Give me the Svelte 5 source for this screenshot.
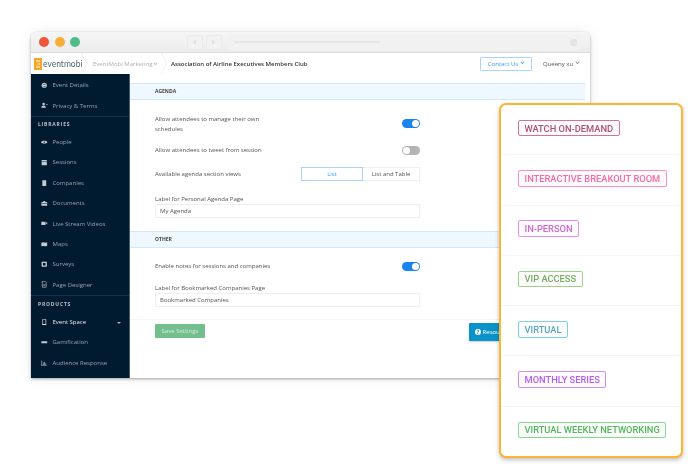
<script>
  const top_items = [
    ['Event Details', 'globe'],
    ['Privacy & Terms', 'user']
  ];
  const libraries = [
    ['People', 'eye'],
    ['Sessions', 'cal'],
    ['Companies', 'doc'],
    ['Documents', 'case'],
    ['Live Stream Videos', 'cam'],
    ['Maps', 'map'],
    ['Surveys', 'box'],
    ['Page Designer', 'page']
  ];
  const products = [
    ['Event Space', 'phone', true],
    ['Gamification', 'game'],
    ['Audience Response', 'chart']
  ];
  const tags = [
    ['WATCH ON-DEMAND', '#d4709b', '#b04f7c'],
    ['INTERACTIVE BREAKOUT ROOM', '#ff8fc0', '#f96aaa'],
    ['IN-PERSON', '#ea8fe9', '#cf68cf'],
    ['VIP ACCESS', '#9ed08a', '#73ae5e'],
    ['VIRTUAL', '#80cfe2', '#58a9be'],
    ['MONTHLY SERIES', '#d18cfb', '#b65ef2'],
    ['VIRTUAL WEEKLY NETWORKING', '#82dc8a', '#52b85c']
  ];
</script>

{#snippet icon(kind)}
  <svg class="ico" viewBox="0 0 10 10" fill="#c3cbd2">
    {#if kind === 'globe'}
      <circle cx="5" cy="5" r="4" />
      <path d="M3 3h4v1H3zM4 6h3v1H4z" fill="#001a30" />
    {:else if kind === 'user'}
      <circle cx="4" cy="3" r="2" />
      <path d="M0.5 9c0-2.5 1.5-3.5 3.5-3.5s3.500 1 3.500 3.500zM8 3.500h2v1H8z" />
    {:else if kind === 'eye'}
      <path d="M0 5c2-3 8-3 10 0-2 3-8 3-10 0z" />
      <circle cx="5" cy="5" r="1" fill="#001a30" />
    {:else if kind === 'cal'}
      <path d="M1 1.500h8v8H1z" />
      <path d="M1 3.500h8v.6H1z" fill="#001a30" />
    {:else if kind === 'doc'}
      <path d="M2 0.500h6v9H2z" />
    {:else if kind === 'case'}
      <path d="M0.500 3h9v6h-9zM3.500 1.500h3V3h-3z" />
      <path d="M0.500 5.500h9v.5h-9z" fill="#001a30" />
    {:else if kind === 'cam'}
      <path d="M0.500 2.500h6.500v5H0.500zM7.500 4.500l2-1.500v4l-2-1.500z" />
    {:else if kind === 'map'}
      <path d="M0.500 2.500l3 -.5 3 .5 3-.5v5.500l-3 .5-3-.5-3 .5z" />
    {:else if kind === 'box'}
      <path d="M1 1h8v8H1z" />
      <path d="M3 3h4v4H3z" fill="#001a30" />
    {:else if kind === 'page'}
      <path d="M2 0.500h4.500L8 2v7.500H2z" fill="none" stroke="#c3cbd2" />
      <path d="M3.500 4.500h3v.7h-3zM3.500 6.500h3v.7h-3z" />
    {:else if kind === 'phone'}
      <path d="M2.500 0.500h5v9h-5z" fill="none" stroke="#e6eaee" />
      <path d="M2.500 7.500h5v2h-5z" fill="#e6eaee" />
    {:else if kind === 'game'}
      <path d="M0.500 3.500h9v3h-9z" />
    {:else}
      <path d="M1 1v8h8" fill="none" stroke="#c3cbd2" />
      <path d="M3 4h1v4H3zM5 2.500h1V8H5zM7 5h1v3H7z" />
    {/if}
  </svg>
{/snippet}

{#snippet navrow(item)}
  <div class="nav-row" class:strong={item[2]}>
    {@render icon(item[1])}
    <span>{item[0]}</span>
    {#if item[2]}<i class="caret"></i>{/if}
  </div>
{/snippet}

{#snippet sep()}
  <svg class="sep" viewBox="0 0 6 21"><path d="M0 0l6 10.500L0 21" fill="none" stroke="#eee" /></svg>
{/snippet}

<div class="page">
  <div class="window">
    <div class="titlebar">
      <span class="dot red"></span>
      <span class="dot amber"></span>
      <span class="dot green"></span>
      <span class="navbtn"><i class="tri left"></i></span>
      <span class="navbtn"><i class="tri right"></i></span>
      <div class="urlbar"><span class="urlfill"></span><span class="urlcirc"></span></div>
    </div>

    <header class="topbar">
      <div class="logo">
        <svg viewBox="0 0 8 12" width="8" height="12">
          <rect width="8" height="12" fill="#f5a623" />
          <path d="M2 3h4M3.500 6h2.500M2 9h4" stroke="#fff" stroke-width="1.200" />
        </svg>
        <span>eventmobi</span>
      </div>
      {@render sep()}
      <span class="crumb">EventMobi Marketing <i class="chev grey"></i></span>
      {@render sep()}
      <span class="org">Association of Airline Executives Members Club</span>
      <span class="contact">Contact Us <i class="chev blue"></i></span>
      <span class="user-name">Queeny xu <i class="chev"></i></span>
    </header>

    <div class="body">
      <aside class="sidebar">
        <div class="nav-group first">
          {#each top_items as item}{@render navrow(item)}{/each}
        </div>
        <div class="nav-group">
          <div class="nav-head">LIBRARIES</div>
          {#each libraries as item}{@render navrow(item)}{/each}
        </div>
        <div class="nav-group">
          <div class="nav-head products">PRODUCTS</div>
          {#each products as item}{@render navrow(item)}{/each}
        </div>
      </aside>

      <main class="content">
        <section>
          <h2 class="band">AGENDA</h2>
          <div class="fields">
            <div class="row two">
              <p>Allow attendees to manage their own<br />schedules</p>
              <span class="toggle on"></span>
            </div>
            <div class="row tweet">
              <p>Allow attendees to tweet from session</p>
              <span class="toggle"></span>
            </div>
            <div class="row views">
              <p>Available agenda section views</p>
              <div class="seg">
                <span class="seg-on">List</span>
                <span>List and Table</span>
              </div>
            </div>
            <label class="lab" for="personal">Label for Personal Agenda Page</label>
            <input id="personal" value="My Agenda" />
          </div>
        </section>

        <section class="other">
          <h2 class="band">OTHER</h2>
          <div class="fields">
            <div class="row notes">
              <p>Enable notes for sessions and companies</p>
              <span class="toggle on"></span>
            </div>
            <label class="lab" for="bookmarked">Label for Bookmarked Companies Page</label>
            <input id="bookmarked" value="Bookmarked Companies" />
          </div>
        </section>

        <div class="actions">
          <button class="save">Save Settings</button>
          <button class="resources"><b>?</b> Resources</button>
        </div>
      </main>
    </div>
  </div>

  <ul class="tags-card">
    {#each tags as [label, line, ink]}
      <li><span class="tag" style="border-color:{line};color:{ink}">{label}</span></li>
    {/each}
  </ul>
</div>

<style>
  :global(body) {
    margin: 0;
    background: #fff;
  }

  .page {
    position: relative;
    width: 700px;
    height: 469px;
    overflow: hidden;
    padding: 32px 0 0 31px;
    box-sizing: border-box;
    font-family: "Open Sans", sans-serif;
  }

  .window {
    width: 559px;
    height: 346px;
    display: flex;
    flex-direction: column;
    border-radius: 6px 6px 0 0;
    background: #fff;
    box-shadow: 0 1px 3px rgba(0, 0, 0, 0.35), 0 0 14px rgba(0, 0, 0, 0.08);
    filter: blur(0.5px);
    overflow: hidden;
  }

  .titlebar {
    height: 21px;
    flex: none;
    display: flex;
    align-items: center;
    padding: 0 9px 0 8px;
    background: linear-gradient(#f5f5f5, #ececec);
    border-bottom: 1px solid #dcdcdc;
    box-sizing: border-box;
  }

  .dot {
    width: 10px;
    height: 10px;
    border-radius: 50%;
    margin-right: 5.500px;
  }
  .red { background: #f0563c; }
  .amber { background: #f8ad3a; }
  .green { background: #4fbc8c; }

  .navbtn {
    width: 16px;
    height: 15px;
    margin-left: 3px;
    background: #f2f2f2;
    border: 1px solid #eaeaea;
    box-sizing: border-box;
    border-radius: 2px;
    display: flex;
    align-items: center;
    justify-content: center;
  }
  .navbtn:nth-of-type(4) { margin-left: 101px; }
  .tri {
    border: 3px solid transparent;
  }
  .tri.left { border-right-color: #e2e2e2; margin-right: 3px; }
  .tri.right { border-left-color: #e2e2e2; margin-left: 3px; }

  .urlbar {
    flex: 1;
    height: 15px;
    margin-left: 7px;
    background: #f1f1f1;
    border-radius: 2px;
    display: flex;
    align-items: center;
    justify-content: space-between;
    padding: 0 4px 0 5px;
  }
  .urlfill {
    width: 146px;
    height: 2px;
    background: #e6e6e6;
  }
  .urlcirc {
    width: 7px;
    height: 7px;
    border-radius: 50%;
    background: #e4e4e4;
  }

  .topbar {
    height: 21px;
    flex: none;
    display: flex;
    align-items: center;
    background: #fff;
    font-size: 6px;
    color: #444;
  }

  .logo {
    display: flex;
    align-items: center;
    gap: 1px;
    width: 50px;
    flex: none;
    padding-left: 3px;
    box-sizing: border-box;
    font-family: "Lato", sans-serif;
    font-size: 8.500px;
    color: #5a6770;
  }
  .logo svg { flex: none; }

  .sep {
    width: 6px;
    height: 21px;
    flex: none;
  }

  .crumb {
    width: 68px;
    margin-left: 6px;
    flex: none;
    color: #b0b0b0;
    white-space: nowrap;
  }

  .org {
    margin-left: 4px;
    font-weight: 600;
    color: #333;
    white-space: nowrap;
  }

  .contact {
    margin-left: auto;
    width: 52px;
    height: 14px;
    box-sizing: border-box;
    display: flex;
    align-items: center;
    justify-content: center;
    gap: 3px;
    border: 1px solid #a9d4fb;
    border-radius: 1px;
    color: #3a9bf2;
  }

  .user-name {
    width: 58px;
    display: flex;
    align-items: center;
    justify-content: center;
    gap: 3px;
    color: #555;
  }

  .chev {
    display: inline-block;
    width: 2px;
    height: 2px;
    border-right: 0.7px solid #999;
    border-bottom: 0.7px solid #999;
    transform: rotate(45deg) translate(-1px, -1px);
  }
  .chev.grey { border-color: #bbb; }
  .chev.blue { border-color: #6db3f5; }

  .body {
    flex: 1;
    display: flex;
    min-height: 0;
  }

  .sidebar {
    width: 99px;
    flex: none;
    background: #001a30;
    color: #98a4ae;
    font-size: 6px;
    box-sizing: border-box;
    border-right: 1px solid #4a5e70;
  }

  .nav-group { border-bottom: 1px solid #14314a; }
  .nav-group:last-child { border-bottom: 0; }
  .nav-group.first { padding-top: 1px; }

  .nav-row {
    height: 20.400px;
    display: flex;
    align-items: center;
    padding: 0 8px 0 10px;
    white-space: nowrap;
  }
  .nav-row.strong {
    color: #e6eaee;
  }

  .ico {
    width: 6.500px;
    height: 6.500px;
    flex: none;
    margin-right: 5px;
  }

  .caret {
    margin-left: auto;
    border: 2.500px solid transparent;
    border-top-color: #a9b3bb;
    margin-top: 3px;
  }

  .nav-head {
    height: 15px;
    line-height: 15px;
    padding-left: 7px;
    font-size: 5px;
    font-weight: 700;
    letter-spacing: 0.8px;
    color: #bcc5cc;
  }
  .nav-head.products { height: 16px; line-height: 17px; }

  .content {
    flex: 1;
    min-width: 0;
    padding: 9px 5px 0 0;
    font-size: 6px;
    color: #555;
  }

  .band {
    margin: 0;
    height: 17px;
    box-sizing: border-box;
    padding-left: 25px;
    line-height: 15px;
    font-size: 5px;
    font-weight: 700;
    color: #444;
    background: #eef8fe;
    border-top: 1px solid #cfeafb;
    border-bottom: 1px solid #cfeafb;
  }

  .fields {
    width: 265px;
    margin-left: 25px;
  }

  .row {
    display: flex;
    align-items: center;
    justify-content: space-between;
  }
  .row p {
    margin: 0;
    line-height: 10px;
  }
  .row.two { margin-top: 13.500px; height: 20px; }
  .row.tweet { margin-top: 11.500px; height: 10px; }
  .row.views { margin-top: 12px; height: 14px; }
  .row.notes { margin-top: 13px; height: 10px; }

  .toggle {
    position: relative;
    width: 18px;
    height: 9px;
    border-radius: 5px;
    background: #b4b4b4;
  }
  .toggle::after {
    content: "";
    position: absolute;
    left: 1px;
    top: 1px;
    width: 7px;
    height: 7px;
    border-radius: 50%;
    background: #fff;
  }
  .toggle.on { background: #1a83f0; }
  .toggle.on::after { left: 10px; }

  .seg {
    display: flex;
    width: 119px;
    height: 14px;
    box-sizing: border-box;
    border: 1px solid #eee;
    align-items: stretch;
  }
  .seg span {
    flex: 1;
    display: flex;
    align-items: center;
    justify-content: center;
  }
  .seg .seg-on {
    flex: none;
    width: 60px;
    margin: -1px 0 -1px -1px;
    border: 1px solid #a9d4fb;
    color: #3a9bf2;
  }

  .lab {
    display: block;
    margin-top: 14px;
    line-height: 9px;
  }
  .other .lab { margin-top: 13px; }

  input {
    display: block;
    width: 100%;
    height: 14px;
    margin-top: 0;
    box-sizing: border-box;
    border: 1px solid #eee;
    padding: 0 4px;
    font: inherit;
    color: #555;
    outline: 0;
  }

  .other { margin-top: 13px; }

  .actions {
    margin-top: 12px;
    padding: 3px 0 0 25px;
    border-top: 1px solid #f5f5f5;
    display: flex;
    gap: 264px;
    align-items: flex-start;
  }

  button {
    font: inherit;
    border: 0;
    color: #fff;
  }

  .save {
    width: 50px;
    height: 14px;
    margin-top: 1px;
    padding: 0;
    background: #72be8c;
    border-radius: 1px;
    color: #d7eedd;
  }

  .resources {
    width: 50px;
    height: 18px;
    flex: none;
    text-align: left;
    padding: 0 0 0 6px;
    background: #0a93c9;
    border-radius: 1px;
    white-space: nowrap;
    box-shadow: 0 1px 2px rgba(0, 0, 0, 0.2);
  }
  .resources b {
    display: inline-block;
    width: 6px;
    height: 6px;
    line-height: 6px;
    border-radius: 50%;
    background: #fff;
    color: #0a93c9;
    font-size: 5px;
    text-align: center;
  }

  .tags-card {
    position: absolute;
    left: 499px;
    top: 103px;
    width: 184px;
    height: 355px;
    box-sizing: border-box;
    margin: 0;
    padding: 0;
    list-style: none;
    background: #fff;
    border: 2px solid #fcb62f;
    border-radius: 7px;
    box-shadow: 0 2px 4px rgba(0, 0, 0, 0.25);
    display: flex;
    flex-direction: column;
    filter: blur(0.3px);
  }

  li {
    flex: 1;
    display: flex;
    align-items: center;
    padding: 0 0 3px 17px;
    border-bottom: 1px solid #f5f5f5;
  }
  li:last-child { border-bottom: 0; }

  .tag {
    height: 16.500px;
    box-sizing: border-box;
    display: flex;
    align-items: center;
    padding: 0 5.500px;
    border: 1.500px solid;
    border-radius: 2px;
    background: #fbfbfb;
    font-family: Roboto, sans-serif;
    font-size: 9.300px;
    font-weight: 500;
    white-space: nowrap;
  }
</style>
